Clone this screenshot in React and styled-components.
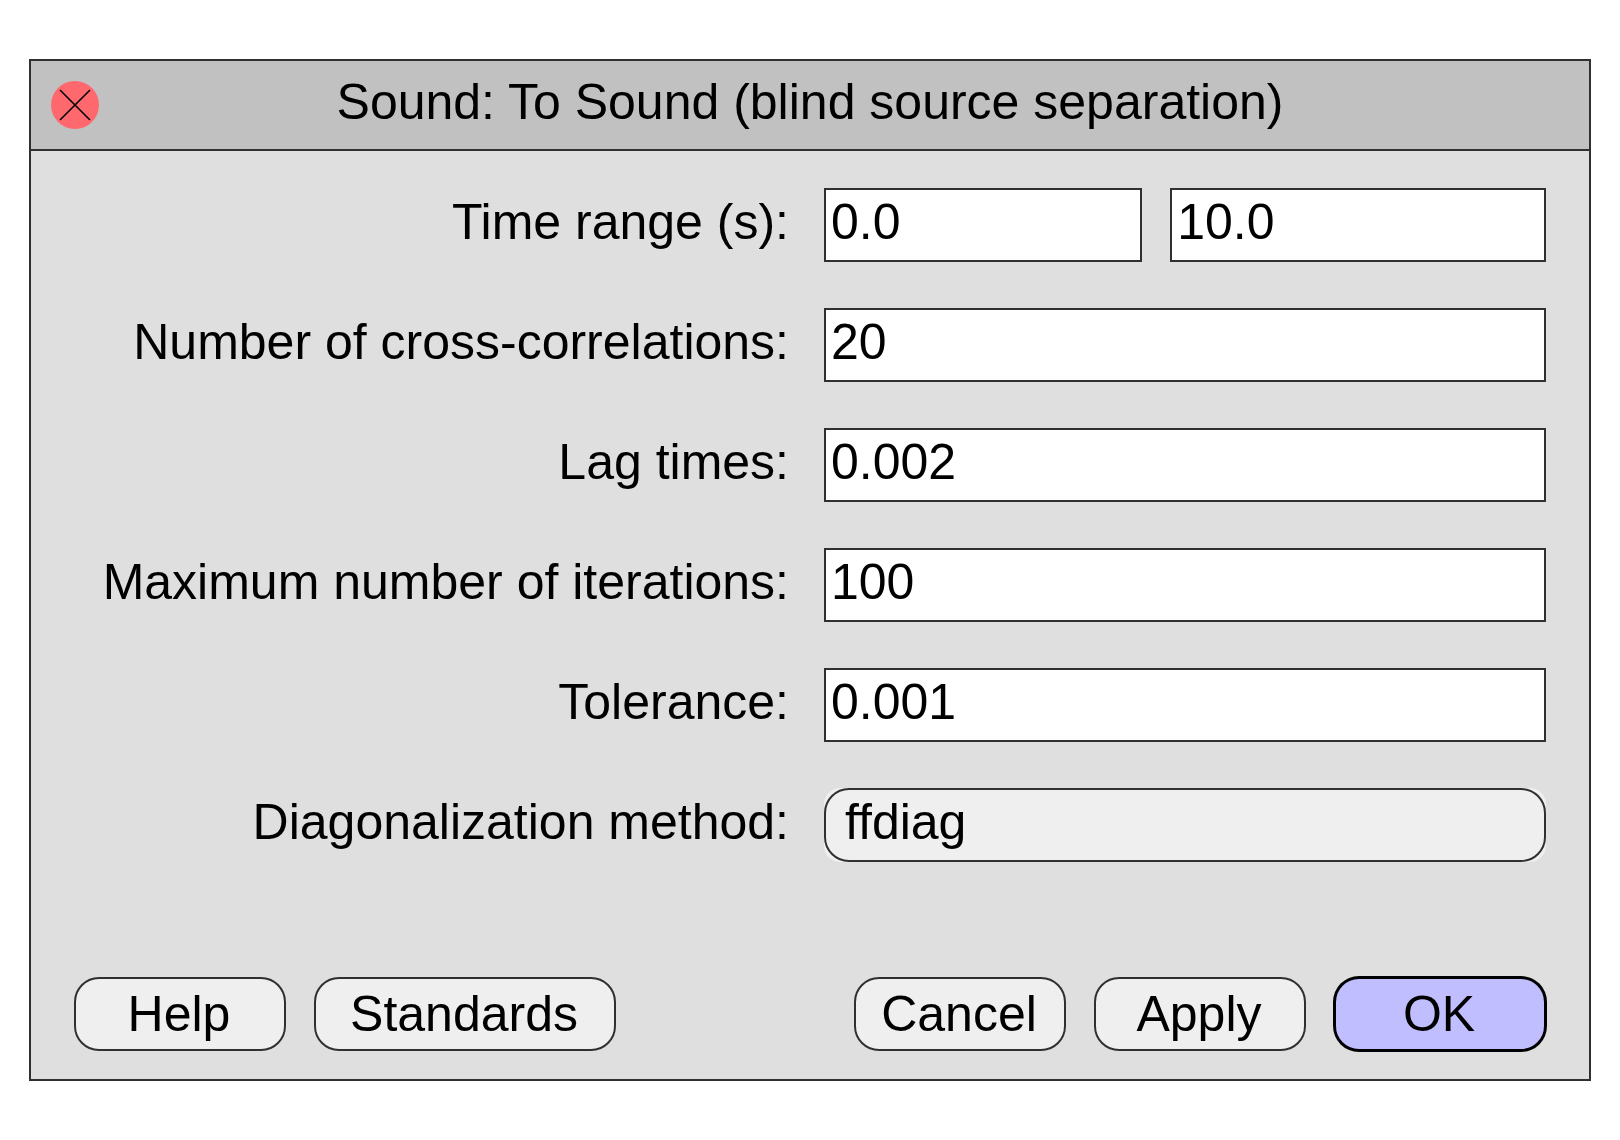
import React from "react";
import styled, { createGlobalStyle } from "styled-components";

const GlobalStyle = createGlobalStyle`
  * {
    box-sizing: border-box;
  }
  body {
    margin: 0;
    background: #ffffff;
  }
  body,
  input,
  select,
  button {
    font-family: "Liberation Sans", Arial, Helvetica, sans-serif;
    font-size: 50px;
    line-height: 58px;
    color: #000000;
  }
`;

const Page = styled.main`
  padding: 59px 29px;
`;

const Dialog = styled.form`
  border: 2px solid #303030;
  background: #dfdfdf;
`;

const TitleBar = styled.header`
  display: grid;
  grid-template-columns: 48px 1fr 48px;
  align-items: center;
  padding: 20px;
  background: #c1c1c1;
  border-bottom: 2px solid #303030;
`;

const CloseButton = styled.button`
  display: flex;
  width: 48px;
  height: 48px;
  padding: 0;
  border: none;
  border-radius: 50%;
  background: #ff696d;
`;

const Title = styled.h1`
  margin: -10px 0;
  padding-bottom: 6px;
  font-size: 50px;
  font-weight: normal;
  text-align: center;
`;

const Fields = styled.div`
  display: flex;
  flex-direction: column;
  gap: 46px;
  padding: 37px 43px 0 0;
`;

const Row = styled.div`
  display: grid;
  grid-template-columns: minmax(0, 758fr) minmax(0, 722fr);
  column-gap: 35px;
`;

const Label = styled.label`
  padding: 5px 0 11px;
  text-align: right;
`;

const Controls = styled.div`
  display: flex;
  gap: 28px;
`;

const Input = styled.input`
  flex: ${(props) => props.$grow || 1} 1 0;
  min-width: 0;
  height: 74px;
  padding: 0 5px 6px;
  border: 2px solid #303030;
  border-radius: 0;
  background: #ffffff;
  outline: none;
`;

const SelectBack = styled.div`
  display: flex;
  border-radius: 16px;
  background: #efefef;
`;

const Select = styled.select`
  flex: 1;
  height: 74px;
  padding: 0 19px 6px;
  appearance: none;
  border: 2px solid #303030;
  border-radius: 25px;
  background: #efefef;
  font-variant-ligatures: none;
`;

const Footer = styled.footer`
  display: flex;
  gap: 28px;
  padding: 115px 43px 28px;
`;

const Spacer = styled.div`
  flex: 1;
`;

const Button = styled.button`
  width: ${(props) => (props.$wide ? "302px" : "212px")};
  height: 74px;
  padding: 0 2px 0 0;
  border: 2px solid #303030;
  border-radius: 25px;
  background: #efefef;
`;

const OkButton = styled(Button)`
  border-color: #000000;
  background: #c0beff;
  box-shadow: 0 0 0 1px #000000;
`;

const fields = [
  { id: "correlations", label: "Number of cross-correlations:", value: "20" },
  { id: "lag", label: "Lag times:", value: "0.002" },
  { id: "iterations", label: "Maximum number of iterations:", value: "100" },
  { id: "tolerance", label: "Tolerance:", value: "0.001" },
];

export default function App() {
  return (
    <Page>
      <GlobalStyle />
      <Dialog onSubmit={(e) => e.preventDefault()}>
        <TitleBar>
          <CloseButton type="button" aria-label="Close">
            <svg width="48" height="48" viewBox="0 0 48 48">
              <path d="M9 9L39 39M39 9L9 39" stroke="#000000" strokeWidth="1.6" />
            </svg>
          </CloseButton>
          <Title>Sound: To Sound (blind source separation)</Title>
        </TitleBar>
        <Fields>
          <Row>
            <Label htmlFor="from">Time range (s):</Label>
            <Controls>
              <Input id="from" $grow={317} defaultValue="0.0" />
              <Input
                id="to"
                $grow={377}
                defaultValue="10.0"
                aria-label="Time range end (s)"
              />
            </Controls>
          </Row>
          {fields.map((field) => (
            <Row key={field.id}>
              <Label htmlFor={field.id}>{field.label}</Label>
              <Controls>
                <Input id={field.id} defaultValue={field.value} />
              </Controls>
            </Row>
          ))}
          <Row>
            <Label htmlFor="method">Diagonalization method:</Label>
            <SelectBack>
              <Select id="method" defaultValue="ffdiag">
                <option value="ffdiag">ffdiag</option>
              </Select>
            </SelectBack>
          </Row>
        </Fields>
        <Footer>
          <Button type="button">Help</Button>
          <Button type="button" $wide>
            Standards
          </Button>
          <Spacer />
          <Button type="button">Cancel</Button>
          <Button type="button">Apply</Button>
          <OkButton type="submit">OK</OkButton>
        </Footer>
      </Dialog>
    </Page>
  );
}
